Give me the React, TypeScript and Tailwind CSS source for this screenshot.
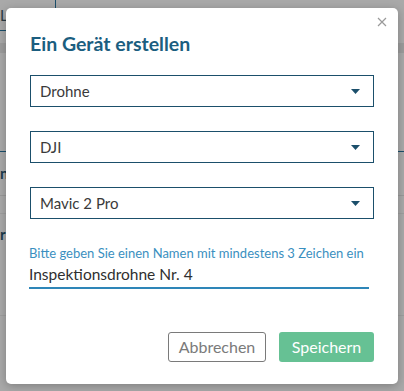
import { useState } from 'react'

const font = { fontFamily: 'Lato, "Noto Sans", sans-serif' }

function Caret() {
  return (
    <svg width="9" height="5" viewBox="0 0 9 5" className="shrink-0">
      <path d="M0 0h9L4.5 5z" fill="#1b4f6b" />
    </svg>
  )
}

function SelectBox({ value }: { value: string }) {
  return (
    <div className="flex h-[32px] items-center justify-between border border-[#1b4f6b] pl-[9px] pr-[13px]">
      <span className="text-[15px] text-[#3a3a3a]">{value}</span>
      <Caret />
    </div>
  )
}

export default function App() {
  const [name, setName] = useState('Inspektionsdrohne Nr. 4')

  return (
    <div className="relative h-[391px] w-[404px] overflow-hidden bg-[#a9a9a9]" style={font}>
      {/* page behind the overlay */}
      <div className="flex h-full flex-col">
        <div className="h-[43px]">
          <div className="flex h-[31px] w-[56px] items-center rounded-br-[5px] border-r border-b border-[#1b4f6b] text-[15px] text-[#2b3a44]">
            Lö
          </div>
        </div>
        <div className="h-[10px] bg-[#9c9c9c]" />
        <div className="h-[99px] border-b border-[#1b4f6b]" />
        <div className="flex h-[44px] items-center border-b border-[#999] text-[15px] font-bold text-[#1b3a4b]">
          <span>n</span>
        </div>
        <div className="h-[18px] border-b border-[#9e9e9e]" />
        <div className="flex h-[40px] items-center text-[15px] font-bold text-[#1b3a4b]">r</div>
        <div className="h-[62px] border-b border-[#9e9e9e]" />
      </div>

      {/* dialog */}
      <div className="absolute top-[8px] left-[6px] flex h-[376px] w-[392px] flex-col rounded-[5px] bg-white px-[24px] pt-[22px] pb-[22px] shadow-[0_2px_10px_rgba(0,0,0,0.25)]">
        <button className="absolute top-[5px] right-[7px] flex h-[18px] w-[18px] items-center justify-center">
          <svg width="10" height="10" viewBox="0 0 10 10">
            <path d="M1 1l8 8M9 1l-8 8" stroke="#9a9a9a" strokeWidth="1.2" fill="none" />
          </svg>
        </button>

        <h2 className="text-[19.5px] leading-[28px] font-bold text-[#1b5e80]">Ein Gerät erstellen</h2>

        <div className="mt-[17px] flex flex-col gap-[24px]">
          <SelectBox value="Drohne" />
          <SelectBox value="DJI" />
          <SelectBox value="Mavic 2 Pro" />
        </div>

        <div className="mt-[25px] mr-[5px] -ml-[1px]">
          <div className="text-[13px] leading-[18px] whitespace-nowrap text-[#3a8fc0]">
            Bitte geben Sie einen Namen mit mindestens 3 Zeichen ein
          </div>
          <input
            value={name}
            onChange={(e) => setName(e.target.value)}
            className="block h-[27px] w-full border-b-2 border-[#2e86b8] pb-[2px] text-[15.5px] text-[#2f2f2f] outline-none"
            style={font}
          />
        </div>

        <div className="mt-auto flex justify-end gap-[13px]">
          <button className="h-[30px] w-[98px] rounded-[3px] border border-[#7a7a7a] text-[16px] text-[#7a7a7a]">
            Abbrechen
          </button>
          <button className="h-[30px] w-[95px] rounded-[3px] bg-[#66c194] text-[16px] text-white">
            Speichern
          </button>
        </div>
      </div>
    </div>
  )
}
